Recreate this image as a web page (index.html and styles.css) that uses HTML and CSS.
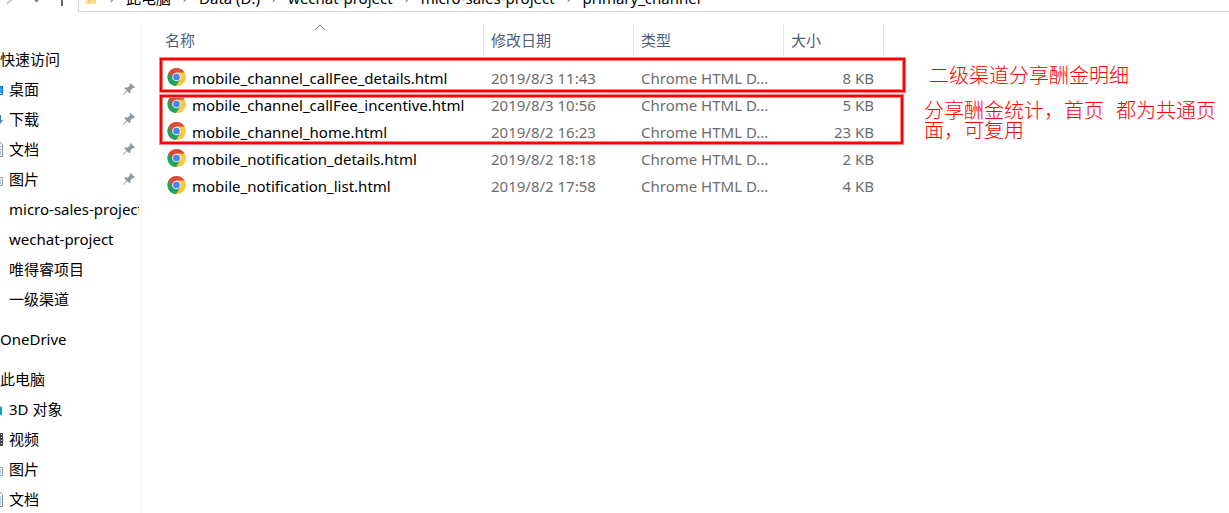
FILE: index.html
```html
<!DOCTYPE html>
<html lang="zh-CN">
<head>
<meta charset="utf-8">
<title>primary_channel</title>
<link rel="stylesheet" href="styles.css">
</head>
<body>
<svg class="defs" aria-hidden="true">
  <symbol id="chrome" viewBox="0 0 48 48">
    <circle cx="24" cy="24" r="23" fill="#fdc93c"/>
    <path d="M24 24 4.100 12.500A23 23 0 0 0 23 47L34 29.500Z" fill="#1da462"/>
    <path d="M24 24 14 29.500 4.100 12.500A23 23 0 0 1 44.500 13.500L24 13.500Z" fill="#db4b3d"/>
    <path d="M24 13.500H44.500A23 23 0 0 1 24 47L34 29.500Z" fill="#fdc93c"/>
    <circle cx="24" cy="24" r="11" fill="#f4f4f4"/>
    <circle cx="24" cy="24" r="8.500" fill="#4587f3"/>
  </symbol>
  <symbol id="pin" viewBox="0 0 14 14">
    <path d="M8.500 1 13 5.200 11.800 6.200 10.800 5.900 8.500 8.200 8.600 10.200 7.500 11.300 5.200 9.200 1.200 13 .8 12.600 4.500 8.500 2.300 6.200 3.400 5.200 5.800 5.400 8.200 3.100 7.700 2Z" fill="#8f9aa3"/>
  </symbol>
  <symbol id="desktop" viewBox="0 0 16 16">
    <path d="M0 5H16V14H0Z" fill="#0a74c8"/><path d="M1 6H15V13H1Z" fill="#27a5f5"/><path d="M13 12H14.500V13H13Z" fill="#fff"/>
  </symbol>
  <symbol id="download" viewBox="0 0 16 16">
    <path d="M12 4H14V9H16L13 13 10 9H12Z" fill="#3f7fc4"/>
  </symbol>
  <symbol id="doc" viewBox="0 0 16 16">
    <path d="M2 1H13L15.500 3.500V15.500H2Z" fill="#fff" stroke="#8b8b8b"/><path d="M4 6H14M4 8.500H14M4 11H14M4 13H14" stroke="#4b9cdb"/>
  </symbol>
  <symbol id="picture" viewBox="0 0 16 16">
    <path d="M.5 6.500H15.500V14.500H.5Z" fill="#fff" stroke="#a0a0a0"/><path d="M2 8H14V13H2Z" fill="#a9cdf3"/>
  </symbol>
  <symbol id="cube" viewBox="0 0 16 16">
    <path d="M2 5 8 3 15 6V14H2Z" fill="#1399d0"/><path d="M2 5 8 3 15 6 8 7Z" fill="#76d2ee"/>
  </symbol>
  <symbol id="film" viewBox="0 0 16 16">
    <path d="M0 2H16V15H0Z" fill="#444"/><path d="M14.500 3V15" stroke="#ddd" stroke-dasharray="1 2"/>
  </symbol>
</svg>

<header class="toolbar">
  <nav class="history">
    <svg width="70" height="12" viewBox="0 0 70 12" fill="none">
      <path d="M7 4 13-2" stroke="#c8c8c8" stroke-width="2"/>
      <path d="M33-3 36.500 1 40-3" stroke="#777" stroke-width="2"/>
      <path d="M62 0V6" stroke="#666" stroke-width="2"/>
    </svg>
  </nav>
  <div class="address">
    <svg class="folder" width="14" height="14" viewBox="0 0 14 14"><path d="M1 0H12V13L11 14H1Z" fill="#f5cf6a"/><path d="M1 0H4V14H1Z" fill="#ffe9a2"/><path d="M4 13 11 8V14H4Z" fill="#fbe08d"/></svg>
    <ol class="crumbs">
      <li>此电脑</li>
      <li>Data (D:)</li>
      <li>wechat-project</li>
      <li>micro-sales-project</li>
      <li>primary_channel</li>
    </ol>
  </div>
</header>

<div class="body">
  <aside class="sidebar">
    <ul class="group">
      <li class="root">快速访问</li>
      <li><span class="slot"><svg><use href="#desktop"/></svg></span><span class="label">桌面</span><svg class="pin"><use href="#pin"/></svg></li>
      <li><span class="slot"><svg><use href="#download"/></svg></span><span class="label">下载</span><svg class="pin"><use href="#pin"/></svg></li>
      <li><span class="slot"><svg><use href="#doc"/></svg></span><span class="label">文档</span><svg class="pin"><use href="#pin"/></svg></li>
      <li><span class="slot"><svg><use href="#picture"/></svg></span><span class="label">图片</span><svg class="pin"><use href="#pin"/></svg></li>
      <li><span class="slot"></span><span class="label">micro-sales-project</span></li>
      <li><span class="slot"></span><span class="label">wechat-project</span></li>
      <li><span class="slot"></span><span class="label">唯得睿项目</span></li>
      <li><span class="slot"></span><span class="label">一级渠道</span></li>
    </ul>
    <ul class="group">
      <li class="root">OneDrive</li>
    </ul>
    <ul class="group">
      <li class="root">此电脑</li>
      <li><span class="slot"><svg><use href="#cube"/></svg></span><span class="label">3D 对象</span></li>
      <li><span class="slot"><svg><use href="#film"/></svg></span><span class="label">视频</span></li>
      <li><span class="slot"><svg><use href="#picture"/></svg></span><span class="label">图片</span></li>
      <li><span class="slot"><svg><use href="#doc"/></svg></span><span class="label">文档</span></li>
    </ul>
  </aside>

  <main class="files">
    <table>
      <colgroup><col class="c-name"><col class="c-date"><col class="c-type"><col class="c-size"></colgroup>
      <thead>
        <tr>
          <th>名称<svg class="sort" viewBox="0 0 10 6"><path d="M.5 5.500 5 1 9.500 5.500" fill="none" stroke="#777"/></svg></th>
          <th>修改日期</th><th>类型</th><th>大小</th>
        </tr>
      </thead>
      <tbody>
        <tr><td><span class="file"><svg><use href="#chrome"/></svg>mobile_channel_callFee_details.html</span></td><td>2019/8/3 11:43</td><td>Chrome HTML D...</td><td>8 KB</td></tr>
        <tr><td><span class="file"><svg><use href="#chrome"/></svg>mobile_channel_callFee_incentive.html</span></td><td>2019/8/3 10:56</td><td>Chrome HTML D...</td><td>5 KB</td></tr>
        <tr><td><span class="file"><svg><use href="#chrome"/></svg>mobile_channel_home.html</span></td><td>2019/8/2 16:23</td><td>Chrome HTML D...</td><td>23 KB</td></tr>
        <tr><td><span class="file"><svg><use href="#chrome"/></svg>mobile_notification_details.html</span></td><td>2019/8/2 18:18</td><td>Chrome HTML D...</td><td>2 KB</td></tr>
        <tr><td><span class="file"><svg><use href="#chrome"/></svg>mobile_notification_list.html</span></td><td>2019/8/2 17:58</td><td>Chrome HTML D...</td><td>4 KB</td></tr>
      </tbody>
    </table>
    <div class="mark mark-one"></div>
    <div class="mark mark-two"></div>
    <p class="note note-one">二级渠道分享酬金明细</p>
    <p class="note note-two">分享酬金统计，首页 都为共通页<br>面，可复用</p>
  </main>
</div>
</body>
</html>
```
FILE: styles.css
```css
* { box-sizing: border-box; }

body {
  display: flex;
  flex-direction: column;
  height: 100vh;
  margin: 0;
  overflow: hidden;
  background: #fff;
  color: #000;
  font: 15px/20px "Noto Sans", "Noto Sans CJK SC", sans-serif;
}

ul, ol { margin: 0; padding: 0; list-style: none; }

.defs { position: absolute; width: 0; height: 0; }

/* Toolbar, scrolled partly out of view */
.toolbar { display: flex; flex: none; height: 12px; overflow: hidden; }
.history { flex: none; width: 78px; }
.history svg { display: block; }
.address {
  display: flex;
  flex: 1;
  align-items: flex-end;
  padding: 0 0 3px 5px;
  border: solid #d9d9d9;
  border-width: 0 0 1px 1px;
}
.folder { flex: none; margin-bottom: 4px; }
.crumbs { display: flex; white-space: nowrap; }
.crumbs li { display: flex; align-items: center; }
.crumbs li::before {
  width: 5px;
  height: 5px;
  margin: 0 12px 0 10px;
  border: solid #777;
  border-width: 1px 1px 0 0;
  transform: rotate(45deg);
  content: "";
}

.body { display: flex; flex: 1; min-height: 0; padding-top: 12px; }

/* Navigation pane */
.sidebar {
  flex: none;
  width: 142px;
  padding-top: 20px;
  overflow: hidden;
  border-right: 1px solid #f5f5f5;
}
.group { margin-bottom: 10px; }
.group li { display: flex; align-items: center; height: 30px; padding-right: 2px; white-space: nowrap; }
.slot { display: flex; flex: none; justify-content: flex-end; width: 3px; height: 16px; margin-right: 6px; overflow: hidden; }
.slot svg { flex: none; width: 16px; height: 16px; }
.label { flex: 1; min-width: 0; overflow: hidden; }
.pin { flex: none; width: 14px; height: 14px; margin-right: 3px; }

/* File list */
.files { position: relative; flex: 1; }
table { width: 742px; border-collapse: separate; border-spacing: 0; table-layout: fixed; }
.c-name { width: 342px; }
.c-date, .c-type { width: 150px; }
.c-size { width: 100px; }
th {
  position: relative;
  height: 32px;
  padding: 0 7px;
  border-right: 1px solid #e5e5e5;
  color: #4c607a;
  font-weight: 400;
  text-align: left;
}
th:first-child { padding-left: 23px; }
.sort { position: absolute; top: 0; left: 173px; width: 10px; height: 6px; }
tbody::before { display: block; height: 8px; content: ""; }
td { height: 27px; padding: 0 7px; color: #6d6d6d; white-space: nowrap; }
td:first-child { padding-left: 25px; color: #000; }
td:last-child { padding-right: 10px; text-align: right; }
.file { display: flex; gap: 6px; align-items: center; }
.file svg { flex: none; width: 19px; height: 20px; margin-bottom: 2px; }

/* Red annotations drawn over the list */
.mark {
  position: absolute;
  left: 18px;
  border: 2px solid #f00;
  box-shadow: 0 0 0 1px #ff8080, inset 0 0 0 1px #ff8080;
}
.mark-one { top: 34px; width: 745px; height: 34px; }
.mark-two { top: 71px; width: 743px; height: 49px; }
.note {
  position: absolute;
  margin: 0;
  color: #f00;
  font: 300 20px/20px "Liberation Mono", "Noto Sans CJK SC", monospace;
  white-space: nowrap;
}
.note-one { top: 44px; left: 787px; }
.note-two { top: 79px; left: 782px; }
```
